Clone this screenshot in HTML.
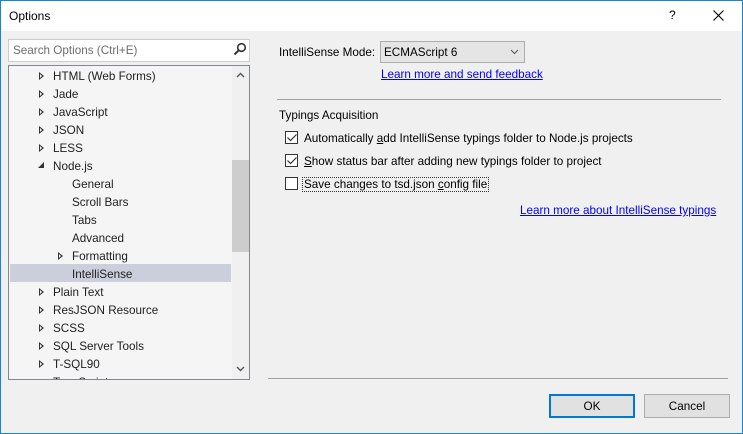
<!DOCTYPE html>
<html><head><style>
*{margin:0;padding:0;box-sizing:border-box}
body{width:743px;height:434px;overflow:hidden;background:#f0f0f0;font-family:"Liberation Sans",sans-serif;font-size:11.7px;color:#000;position:relative}
.a{position:absolute;white-space:nowrap}
.t{margin-top:1px}
.win{position:absolute;left:0;top:0;width:743px;height:434px;border:1px solid #1883d7}
.title{position:absolute;left:1px;top:1px;width:741px;height:30px;background:#fff}
.row{position:absolute;height:18px;line-height:20px;white-space:nowrap;color:#1e1e1e}
.tri{position:absolute;width:0;height:0;border-top:4px solid transparent;border-bottom:4px solid transparent;border-left:5px solid #333}
.tri::after{content:"";position:absolute;left:-4px;top:-2px;border-top:2px solid transparent;border-bottom:2px solid transparent;border-left:2.5px solid #f5f5f5}
.cb{position:absolute;width:13px;height:13px;border:1px solid #333;background:#fff}
a{color:#0000ff;text-decoration:underline}
.btn{position:absolute;height:24px;line-height:23px;text-align:center;background:#e1e1e1;border:1px solid #adadad}
</style></head><body>
<div class="win"></div>
<div class="title"></div>
<div class="a" style="left:9px;top:9px;font-size:12px">Options</div>
<div class="a" style="left:669px;top:8px;font-size:12px">?</div>
<svg class="a" style="left:713px;top:10px" width="11" height="11"><path d="M0.5 0.5L10.5 10.5M10.5 0.5L0.5 10.5" stroke="#000" stroke-width="1.1"/></svg>

<div class="a" style="left:8px;top:39px;width:242px;height:23px;background:#fff;border:1px solid #ccc"></div>
<div class="a" style="left:13px;top:44px;color:#6d6d6d">Search Options (Ctrl+E)</div>
<svg class="a" style="left:233px;top:42px" width="14" height="14"><circle cx="8.5" cy="5.5" r="3.8" stroke="#333" stroke-width="1.6" fill="none"/><path d="M5.7 8.3L1.5 12.5" stroke="#333" stroke-width="2"/></svg>

<div class="a" style="left:8px;top:65px;width:242px;height:315px;background:#f5f5f5;border:1px solid #828790;overflow:hidden">
 <div class="a" style="left:223px;top:0;width:17px;height:313px;background:#f0f0f0"></div>
 <div class="a" style="left:223px;top:94px;width:17px;height:92px;background:#cdcdcd"></div>
 <svg class="a" style="left:227px;top:6px" width="9" height="6"><path d="M1 5L4.5 1.5L8 5" stroke="#555" stroke-width="1.4" fill="none"/></svg>
 <svg class="a" style="left:227px;top:300px" width="9" height="6"><path d="M1 1L4.5 4.5L8 1" stroke="#555" stroke-width="1.4" fill="none"/></svg>
 <div class="a" style="left:1px;top:198px;width:221px;height:18px;background:#cccedb"></div>
</div>
<div style="position:absolute;left:9px;top:66px;width:222px;height:313px;overflow:hidden">
 <div class="tri" style="left:30px;top:6px"></div><div class="row" style="left:44px;top:1px">HTML (Web Forms)</div>
 <div class="tri" style="left:30px;top:24px"></div><div class="row" style="left:44px;top:19px">Jade</div>
 <div class="tri" style="left:30px;top:42px"></div><div class="row" style="left:44px;top:37px">JavaScript</div>
 <div class="tri" style="left:30px;top:60px"></div><div class="row" style="left:44px;top:55px">JSON</div>
 <div class="tri" style="left:30px;top:78px"></div><div class="row" style="left:44px;top:73px">LESS</div>
 <svg class="a" style="left:29px;top:96px" width="7" height="7"><path d="M6 0L6 6L0 6Z" fill="#333"/></svg><div class="row" style="left:44px;top:91px">Node.js</div>
 <div class="row" style="left:63px;top:109px">General</div>
 <div class="row" style="left:63px;top:127px">Scroll Bars</div>
 <div class="row" style="left:63px;top:145px">Tabs</div>
 <div class="row" style="left:63px;top:163px">Advanced</div>
 <div class="tri" style="left:49px;top:186px"></div><div class="row" style="left:63px;top:181px">Formatting</div>
 <div class="row" style="left:63px;top:199px">IntelliSense</div>
 <div class="tri" style="left:30px;top:222px"></div><div class="row" style="left:44px;top:217px">Plain Text</div>
 <div class="tri" style="left:30px;top:240px"></div><div class="row" style="left:44px;top:235px">ResJSON Resource</div>
 <div class="tri" style="left:30px;top:258px"></div><div class="row" style="left:44px;top:253px">SCSS</div>
 <div class="tri" style="left:30px;top:276px"></div><div class="row" style="left:44px;top:271px">SQL Server Tools</div>
 <div class="tri" style="left:30px;top:294px"></div><div class="row" style="left:44px;top:289px">T-SQL90</div>
 <div class="row" style="left:44px;top:307px">TypeScript</div>
</div>

<div class="a" style="left:279px;top:46px">IntelliSense Mode:</div>
<div class="a" style="left:380px;top:41px;width:145px;height:22px;background:#e5e5e5;border:1px solid #adadad"></div>
<div class="a" style="left:384px;top:46px">ECMAScript 6</div>
<svg class="a" style="left:510px;top:49px" width="9" height="6"><path d="M1 1L4.5 4.5L8 1" stroke="#555" stroke-width="1" fill="none"/></svg>
<a class="a" style="left:381px;top:68px">Learn more and send feedback</a>
<div class="a" style="left:277px;top:99px;width:444px;height:1px;background:#a0a0a0"></div>
<div class="a" style="left:279px;top:109px">Typings Acquisition</div>
<div class="cb" style="left:285px;top:131px"></div><svg class="a" style="left:287px;top:134px" width="10" height="8"><path d="M0.5 3.5L3.5 6.5L9.5 0.5" stroke="#333" stroke-width="1.2" fill="none"/></svg>
<div class="a" style="left:304px;top:132px">Automatically <u>a</u>dd IntelliSense typings folder to Node.js projects</div>
<div class="cb" style="left:285px;top:154px"></div><svg class="a" style="left:287px;top:157px" width="10" height="8"><path d="M0.5 3.5L3.5 6.5L9.5 0.5" stroke="#333" stroke-width="1.2" fill="none"/></svg>
<div class="a" style="left:304px;top:155px"><u>S</u>how status bar after adding new typings folder to project</div>
<div class="cb" style="left:285px;top:177px"></div>
<div class="a" style="left:302px;top:177px;border:1px dotted #333;padding:0 1px">Save changes to tsd.json <u>c</u>onfig file</div>
<a class="a" style="left:520px;top:204px">Learn more about IntelliSense typings</a>

<div class="a" style="left:268px;top:378px;width:460px;height:1px;background:#a0a0a0"></div>
<div class="btn" style="left:549px;top:394px;width:86px;border:2px solid #0078d7;line-height:21px">OK</div>
<div class="btn" style="left:644px;top:394px;width:86px">Cancel</div>
</body></html>
